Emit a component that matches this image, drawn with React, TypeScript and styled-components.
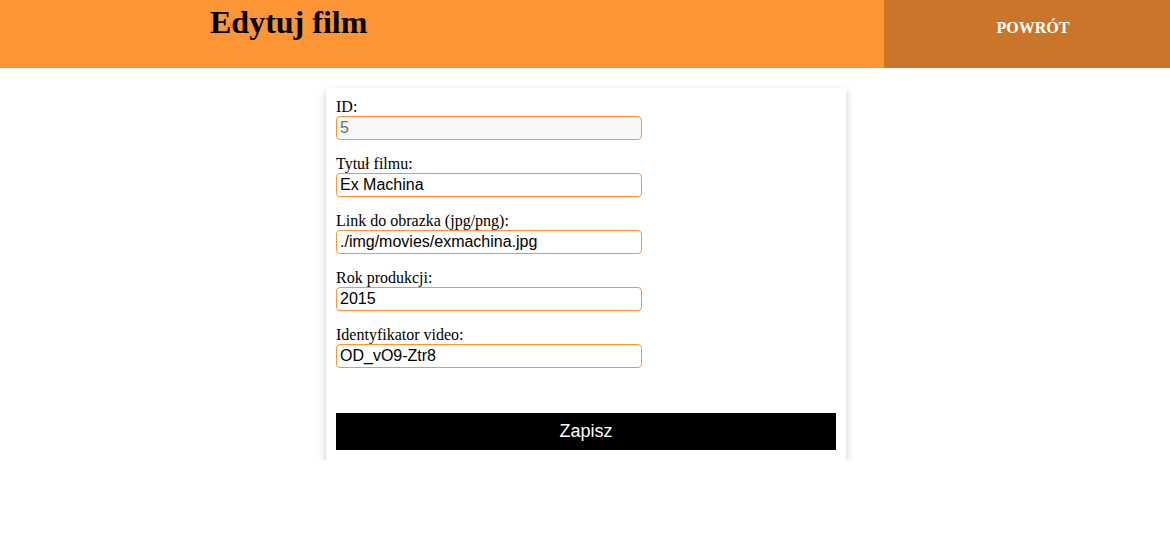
import styled, { createGlobalStyle } from 'styled-components'

const Global = createGlobalStyle`
  body {
    margin: 0;
    background: #fff;
    font-family: "Liberation Serif", "Times New Roman", serif;
  }
`

const Header = styled.header`
  display: flex;
  height: 68px;
  background: #fe9535;
`

const TitleBox = styled.div`
  flex: 1;
  padding: 4px 0 0 210px;
`

const Title = styled.h1`
  margin: 0;
  font-size: 32px;
  font-weight: bold;
  color: #000;
`

const BackButton = styled.a`
  width: 286px;
  box-sizing: border-box;
  padding: 19px 0 0 12px;
  background: #c9762a;
  color: #fff;
  font-weight: bold;
  font-size: 16px;
  text-align: center;
  text-decoration: none;
  cursor: pointer;
`

const Card = styled.form`
  width: 520px;
  box-sizing: border-box;
  margin: 20px auto 0;
  padding: 10px;
  background: #fff;
  box-shadow: 0 4px 8px 0 rgba(0, 0, 0, 0.22);
  transform: translateX(1px);
`

const Field = styled.div`
  margin-bottom: 15px;
`

const Label = styled.label`
  display: block;
  font-size: 16px;
  line-height: 18px;
  color: #000;
`

const Input = styled.input<{ $readOnly?: boolean }>`
  display: block;
  width: 306px;
  height: 24px;
  box-sizing: border-box;
  padding: 1px 3px;
  border: 1px solid #fe9535;
  border-radius: 4px;
  font-family: "Liberation Sans", Arial, sans-serif;
  font-size: 16px;
  color: ${p => (p.$readOnly ? '#6d6d6d' : '#000')};
  background: ${p => (p.$readOnly ? '#f8f8f8' : '#fff')};
  outline: none;
`

const SaveButton = styled.button`
  display: block;
  width: 100%;
  height: 37px;
  margin-top: 45px;
  border: none;
  background: #000;
  color: #fff;
  font-family: "Liberation Sans", Arial, sans-serif;
  font-size: 18px;
  cursor: pointer;
`

const fields = [
  { label: 'Tytuł filmu:', value: 'Ex Machina' },
  { label: 'Link do obrazka (jpg/png):', value: './img/movies/exmachina.jpg' },
  { label: 'Rok produkcji:', value: '2015' },
  { label: 'Identyfikator video:', value: 'OD_vO9-Ztr8' },
]

export default function App() {
  return (
    <>
      <Global />
      <Header>
        <TitleBox>
          <Title>Edytuj film</Title>
        </TitleBox>
        <BackButton>POWRÓT</BackButton>
      </Header>
      <Card onSubmit={e => e.preventDefault()}>
        <Field>
          <Label>ID:</Label>
          <Input $readOnly readOnly defaultValue="5" />
        </Field>
        {fields.map(f => (
          <Field key={f.label}>
            <Label>{f.label}</Label>
            <Input defaultValue={f.value} />
          </Field>
        ))}
        <SaveButton type="submit">Zapisz</SaveButton>
      </Card>
    </>
  )
}
